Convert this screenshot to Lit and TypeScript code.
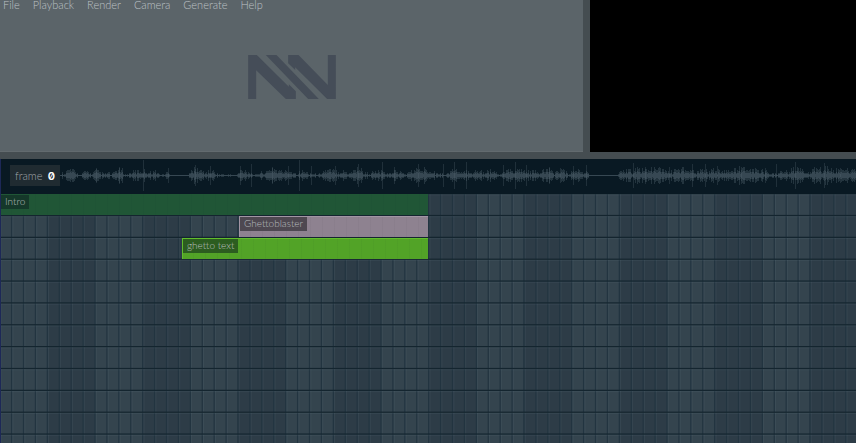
import { LitElement, html, css, svg } from "lit";
import { customElement } from "lit/decorators.js";
import { styleMap } from "lit/directives/style-map.js";

interface Clip {
  name: string;
  start: number;
  end: number;
  kind: string;
}

const MENU = ["File", "Playback", "Render", "Camera", "Generate", "Help"];

const CLIPS: Clip[] = [
  { name: "Intro", start: 0, end: 428, kind: "intro" },
  { name: "Ghettoblaster", start: 239, end: 428, kind: "model" },
  { name: "ghetto text", start: 182, end: 428, kind: "text" },
];

// Loudness envelope: [time, half height]
const ENVELOPE = [
  [0, 1], [58, 2], [66, 5], [70, 7], [76, 4], [80, 1], [85, 5], [88, 5], [91, 1], [95, 6], [100, 4],
  [104, 2], [108, 4], [111, 1], [115, 6], [122, 6], [126, 1], [132, 5], [137, 5], [143, 6], [149, 4],
  [155, 5], [160, 1], [167, 4], [171, 1], [188, 1], [192, 7], [198, 7], [205, 4], [213, 5], [218, 2],
  [236, 1], [240, 6], [246, 6], [254, 1], [260, 4], [266, 4], [272, 9], [280, 5], [290, 6], [295, 3],
  [303, 5], [310, 3], [318, 2], [324, 6], [334, 6], [350, 4], [358, 9], [366, 3], [380, 5], [388, 2],
  [394, 6], [406, 2], [412, 6], [418, 7], [430, 8], [436, 3], [446, 2], [454, 8], [460, 3], [466, 5],
  [480, 5], [490, 6], [498, 2], [506, 5], [516, 6], [528, 5], [540, 4], [548, 8], [553, 3], [560, 7],
  [568, 3], [576, 6], [588, 4], [592, 1], [616, 1], [622, 5], [633, 7], [645, 7], [660, 7], [672, 5],
  [682, 8], [692, 6], [705, 6], [717, 6], [726, 5], [740, 8], [752, 7], [764, 5], [775, 3], [786, 5],
  [796, 8], [806, 4], [812, 7], [828, 8], [840, 6], [856, 6],
];

// Drum hits: [time, half height]
const HITS = [
  [96, 8], [119, 9], [143, 16], [168, 8], [195, 11], [210, 10], [240, 10], [251, 12], [272, 9],
  [288, 10], [299, 16], [311, 10], [335, 10], [358, 12], [382, 14], [394, 9], [418, 12], [443, 12],
  [454, 14], [466, 14], [503, 11], [515, 14], [526, 11], [549, 9], [560, 8], [573, 10], [586, 11],
  [633, 13], [645, 9], [669, 9], [692, 12], [705, 12], [717, 10], [741, 9], [765, 8], [776, 12],
  [795, 14], [824, 13], [840, 8],
];

const MID = 17;

function loudness(x: number): number {
  for (let i = 1; i < ENVELOPE.length; i++) {
    const [x1, y1] = ENVELOPE[i];
    if (x <= x1) {
      const [x0, y0] = ENVELOPE[i - 1];
      return y0 + ((y1 - y0) * (x - x0)) / (x1 - x0);
    }
  }
  return 4;
}

function waveBars() {
  const bars = [];
  for (let x = 58; x < 2400; x++) {
    const noise = Math.abs((Math.sin(x * 12.9898) * 43758.5453) % 1);
    const body = loudness(x % 856);
    const h = Math.max(1, Math.round(body * (0.35 + noise * 0.95)));
    const core = Math.max(1, Math.round(h / 2));
    bars.push(svg`<rect x=${x} y=${MID - h} width="1" height=${h * 2 - 1} opacity=".35"/>
      <rect x=${x} y=${MID - core} width="1" height=${core * 2 - 1} opacity=".4"/>`);
  }
  for (const [x, h] of HITS) {
    bars.push(svg`<rect x=${x} y=${MID - h} width="1" height=${h * 2 - 1} opacity=".3"/>`);
  }
  return bars;
}

const CELLS = 24;
const TILE_W = 286;
const ROWS = 7;
const TILE_H = 153;

function gridTile() {
  const parts = [];
  for (let i = 0; i < CELLS; i++) {
    const x = (i * TILE_W) / CELLS;
    parts.push(svg`<rect class="beat" x=${x} y="0" width="1.4" height=${TILE_H}/>
      <rect class="glint" x=${x + 1.4} y="0" width="1" height=${TILE_H}/>`);
  }
  for (let j = 0; j < ROWS; j++) {
    const y = (j * TILE_H) / ROWS;
    parts.push(svg`<rect class="lane" x="0" y=${y} width=${TILE_W} height="1.3"/>
      <rect class="glint" x="0" y=${y + 1.3} width=${TILE_W} height="1"/>`);
  }
  return parts;
}

@customElement("app-root")
export class AppRoot extends LitElement {
  static styles = css`
    :host {
      display: flex;
      flex-direction: column;
      min-height: 100vh;
      overflow: hidden;
      background: #454d51;
      color: #a7adb0;
      font: 300 11px/14px Lato, "Open Sans", sans-serif;
    }
    button {
      font: inherit;
      color: inherit;
      background: none;
      border: 0;
      padding: 0;
      margin: 0;
      text-align: left;
      cursor: pointer;
    }
    .top {
      display: flex;
      gap: 7px;
      height: 152px;
      padding-bottom: 7px;
    }
    .editor {
      flex: 583 1 0;
      display: flex;
      flex-direction: column;
      background: #5b6469;
      box-shadow: inset 0 -1px #636b6f;
    }
    .menu {
      display: flex;
      gap: 13px;
      padding: 0 3px;
      height: 10px;
      line-height: 10px;
      color: #bcc1c5;
    }
    .logo {
      display: block;
      width: 88px;
      height: 44px;
      margin: 45px auto 0;
      fill: #454d58;
    }
    .preview {
      flex: 266 1 0;
      background: #000;
    }
    .timeline {
      position: relative;
      flex: 1;
      display: flex;
      flex-direction: column;
    }
    .wave {
      position: relative;
      height: 35px;
      background: #091923;
      overflow: hidden;
    }
    .wave svg {
      display: block;
      width: 100%;
      height: 100%;
      fill: #566772;
    }
    .frame {
      position: absolute;
      left: 10px;
      top: 6px;
      height: 21px;
      width: 50px;
      box-sizing: border-box;
      padding: 0 5px;
      display: flex;
      align-items: center;
      justify-content: space-between;
      background: #202b31;
      color: #a0a6a9;
    }
    .frame output {
      color: #fff;
      font: 600 11px/14px Inter, sans-serif;
      font-feature-settings: "zero";
    }
    .tracks {
      position: relative;
      flex: 1;
      background: #34444e;
    }
    .grid {
      position: absolute;
      inset: 0;
      width: 100%;
      height: 100%;
    }
    .dark {
      fill: #2d3c47;
    }
    .light {
      fill: #34444e;
    }
    .beat {
      fill: #223440;
    }
    .lane {
      fill: #14252f;
    }
    .glint {
      fill: #8fa4ad;
      opacity: 0.08;
    }
    .lanes {
      position: relative;
      display: flex;
      flex-direction: column;
      gap: 1px;
    }
    .clip {
      display: flex;
      align-items: flex-start;
      height: 21px;
      padding: 1px;
      box-sizing: border-box;
      background-image: repeating-linear-gradient(
        90deg,
        transparent 0 11px,
        rgba(0, 20, 30, 0.03) 11px 12px
      );
    }
    .intro {
      background-color: #205636;
    }
    .model {
      background-color: #8e8290;
      box-shadow: inset 1px 1px #a295a4;
    }
    .text {
      background-color: #52a327;
      box-shadow: inset 1px 1px #62bd2c;
    }
    .label {
      padding: 0 4px;
      height: 14px;
      font-size: 10px;
      line-height: 13px;
      color: #b8bdbf;
    }
    .intro .label {
      background: #15382a;
    }
    .model .label {
      background: #4e4851;
    }
    .text .label {
      background: #2c5d20;
    }
    .playhead {
      position: absolute;
      left: 0;
      top: 0;
      bottom: 0;
      width: 1px;
      background: #1d2857;
    }
  `;

  render() {
    return html`
      <div class="top">
        <section class="editor">
          <nav class="menu">
            ${MENU.map((m) => html`<button>${m}</button>`)}
          </nav>
          <svg class="logo" viewBox="0 0 263 132" aria-hidden="true">
            <path
              d="M0 0H26L122 95V88L143 109V132H113L24 46V132H0ZM53 0H85L212 132H180ZM120 0H151L239 90V0H263V132H237L141 37V45L120 25Z"
            />
          </svg>
        </section>
        <section class="preview" aria-label="Preview"></section>
      </div>
      <section class="timeline">
        <div class="wave">
          <svg aria-hidden="true">${waveBars()}</svg>
          <label class="frame">frame <output>0</output></label>
        </div>
        <div class="tracks">
          <svg class="grid" aria-hidden="true">
            <defs>
              <pattern
                id="cells"
                x="-1"
                y="-1"
                width=${TILE_W}
                height=${TILE_H}
                patternUnits="userSpaceOnUse"
              >
                <rect class="light" width=${TILE_W} height=${TILE_H} />
                <rect class="dark" x="48" width="48" height=${TILE_H} />
                <rect class="dark" x="143" width="48" height=${TILE_H} />
                <rect class="dark" x="238" width="48" height=${TILE_H} />
                ${gridTile()}
              </pattern>
            </defs>
            <rect width="100%" height="100%" fill="url(#cells)" />
          </svg>
          <div class="lanes">
            ${CLIPS.map(
              (c) => html`<button
                class="clip ${c.kind}"
                style=${styleMap({
                  marginLeft: `${c.start}px`,
                  width: `${c.end - c.start}px`,
                })}
              >
                <span class="label">${c.name}</span>
              </button>`
            )}
          </div>
        </div>
        <div class="playhead"></div>
      </section>
    `;
  }
}
